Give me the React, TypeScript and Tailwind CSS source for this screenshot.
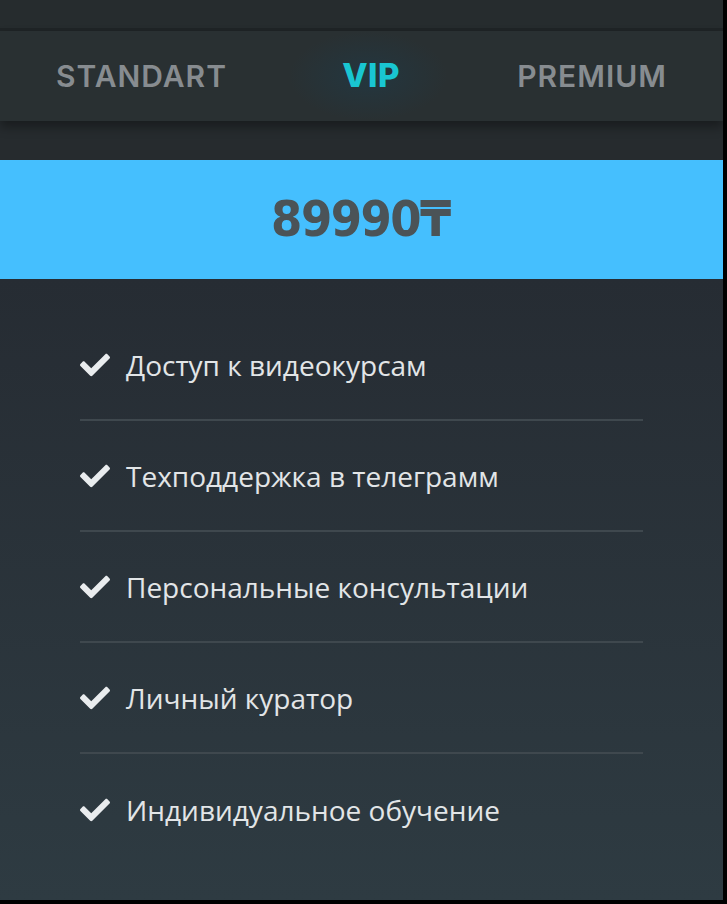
import React from "react";
import { FaCheck } from "react-icons/fa";

const features = [
  "Доступ к видеокурсам",
  "Техподдержка в телеграмм",
  "Персональные консультации",
  "Личный куратор",
  "Индивидуальное обучение",
];

export default function App() {
  return (
    <div className="w-[727px] h-[904px] bg-black overflow-hidden">
      <div className="w-[723px] h-[900px] flex flex-col bg-[#262c2e]">
        <div className="h-[28px] bg-[#262c2e]" />
        <div className="h-[3px] bg-[#1f2426]" />
        <div className="relative h-[90px] bg-[#293032] flex items-center shadow-[0_6px_10px_rgba(0,0,0,0.35)] z-10">
          <div className="absolute left-[288px] top-0 w-[160px] h-[90px] bg-[radial-gradient(ellipse_at_center,rgba(30,60,75,0.55),rgba(41,48,50,0)_70%)]" />
          <div
            className="relative flex justify-between w-full items-center px-[56px] text-[30px] font-semibold tracking-[1px]"
            style={{ fontFamily: "Inter, 'Noto Sans', sans-serif" }}
          >
            <div className="text-[#878c90]">STANDART</div>
            <div className="text-[#19c6d2] font-extrabold text-[33px] tracking-[0.5px] pr-[2px]">VIP</div>
            <div className="text-[#878c90]">PREMIUM</div>
          </div>
        </div>
        <div className="h-[39px] bg-[#262b2e]" />
        <div className="h-[119px] bg-[#45bffe] flex items-center justify-center">
          <span
            className="text-[50px] font-bold text-[#4b5357] tracking-[-1.5px] pr-[2px]"
            style={{ fontFamily: "'DejaVu Sans Condensed', 'Noto Sans', sans-serif" }}
          >
            89990₸
          </span>
        </div>
        <div className="flex-1 bg-gradient-to-b from-[#262c33] to-[#2e3b42] px-[80px] pt-[31px]">
          {features.map((f, i) => (
            <div
              key={f}
              className={`h-[111px] flex items-center gap-[16px] ${i < features.length - 1 ? "border-b-2 border-[#3f484e]" : ""}`}
            >
              <FaCheck className="text-[#e9ecee] w-[30px] h-[30px] shrink-0" />
              <span
                className="text-[28px] text-[#e2e5e7]"
                style={{ fontFamily: "'Open Sans', 'Noto Sans', sans-serif" }}
              >
                {f}
              </span>
            </div>
          ))}
        </div>
      </div>
    </div>
  );
}
